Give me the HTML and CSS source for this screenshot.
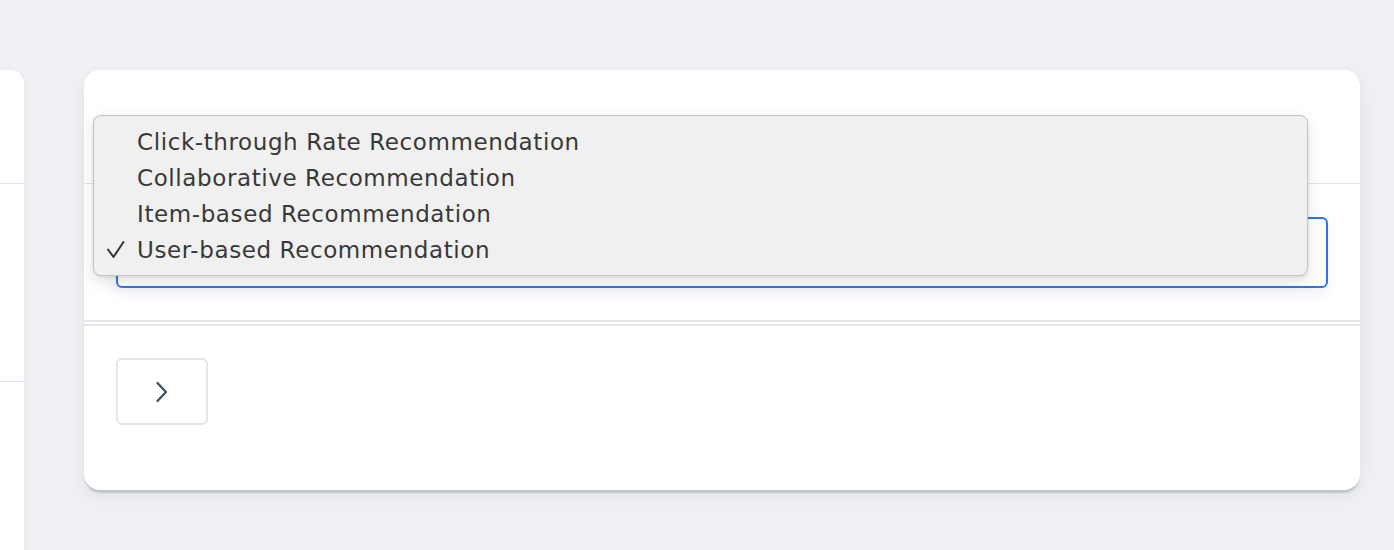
FILE: index.html
```html
<!DOCTYPE html>
<html lang="en">
<head>
<meta charset="utf-8">
<title>Recommender</title>
<link rel="stylesheet" href="styles.css">
</head>
<body>
<div class="stage">
  <aside class="side-card">
    <div class="side-head"></div>
    <div class="side-body"></div>
    <div class="side-foot"></div>
  </aside>
  <main class="card">
    <header class="card-head">
      <h1 class="title">Recommendation type</h1>
    </header>
    <section class="card-body">
      <div class="select">User-based Recommendation</div>
    </section>
    <div class="double-rule"></div>
    <footer class="card-foot">
      <button class="next-btn" type="button" aria-label="Next">
        <svg width="14" height="22" viewBox="0 0 14 22" fill="none"><path d="M2.5 2 L11 11 L2.5 20" stroke="#3b4a6b" stroke-width="2.2" stroke-linecap="round" stroke-linejoin="round"/></svg>
      </button>
    </footer>
    <ul class="menu">
      <li class="item">Click-through Rate Recommendation</li>
      <li class="item">Collaborative Recommendation</li>
      <li class="item">Item-based Recommendation</li>
      <li class="item checked"><svg class="check" width="20" height="20" viewBox="0 0 20 20" fill="none"><path d="M2 9.5 L7.5 17 L17.5 2" stroke="#363636" stroke-width="2" stroke-linecap="round" stroke-linejoin="round"/></svg>User-based Recommendation</li>
    </ul>
  </main>
</div>
</body>
</html>
```
FILE: styles.css
```css
html, body {
  margin: 0;
  padding: 0;
}
body {
  background: #eff0f3;
  font-family: "Inter", "Liberation Sans", sans-serif;
  width: 1394px;
  height: 550px;
  overflow: hidden;
}
.stage {
  display: flex;
  align-items: flex-start;
  gap: 60px;
  padding-top: 70px;
  height: 480px;
  overflow: hidden;
}
.side-card {
  width: 300px;
  margin-left: -276px;
  height: 620px;
  background: #ffffff;
  border-radius: 14px;
  display: flex;
  flex-direction: column;
  box-shadow: 0 1px 6px rgba(20, 30, 50, 0.05);
}
.side-head {
  height: 113px;
  border-bottom: 1px solid #e2e4e8;
}
.side-body {
  height: 197px;
  border-bottom: 1px solid #e2e4e8;
}
.card {
  position: relative;
  width: 1276px;
  height: 420px;
  background: #ffffff;
  border-radius: 16px;
  box-shadow: 0 4px 2px -1px rgba(120, 126, 136, 0.35), 0 6px 18px rgba(20, 30, 50, 0.06);
  display: flex;
  flex-direction: column;
}
.card-head {
  height: 114px;
  border-bottom: 1px solid #e2e4e8;
  padding: 42px 32px 0;
  box-sizing: border-box;
}
.title {
  margin: 0;
  font-size: 28px;
  font-weight: 700;
  color: #1f2a44;
  line-height: 34px;
}
.card-body {
  padding: 33px 32px 32px;
}
.select {
  height: 71px;
  box-sizing: border-box;
  border: 2px solid #2f76e4;
  border-radius: 6px;
  box-shadow: 0 6px 14px rgba(40, 70, 140, 0.08);
  padding: 0 20px;
  display: flex;
  align-items: center;
  font-size: 20px;
  color: #1f2a44;
}
.double-rule {
  height: 2px;
  border-top: 2px solid #e4e6ea;
  border-bottom: 2px solid #e4e6ea;
}
.card-foot {
  padding: 32px 32px;
}
.next-btn {
  width: 92px;
  height: 67px;
  box-sizing: border-box;
  background: #ffffff;
  border: 2px solid #e3e5ea;
  border-radius: 6px;
  display: flex;
  align-items: center;
  justify-content: center;
  padding: 0;
}
.menu {
  position: absolute;
  left: 9px;
  top: 45px;
  width: 1215px;
  height: 161px;
  box-sizing: border-box;
  margin: 0;
  padding: 8px 0 0;
  list-style: none;
  background: #f0f0f0;
  border: 1px solid #c4c4c4;
  border-radius: 8px;
  box-shadow: 0 6px 16px rgba(0, 0, 0, 0.12), 0 1px 3px rgba(0, 0, 0, 0.08);
}
.item {
  position: relative;
  height: 36px;
  line-height: 36px;
  padding-left: 43px;
  font-family: "DejaVu Sans", "Inter", sans-serif;
  font-size: 23px;
  letter-spacing: 0.6px;
  color: #383838;
  white-space: nowrap;
}
.check {
  position: absolute;
  left: 12px;
  top: 8px;
}
```
